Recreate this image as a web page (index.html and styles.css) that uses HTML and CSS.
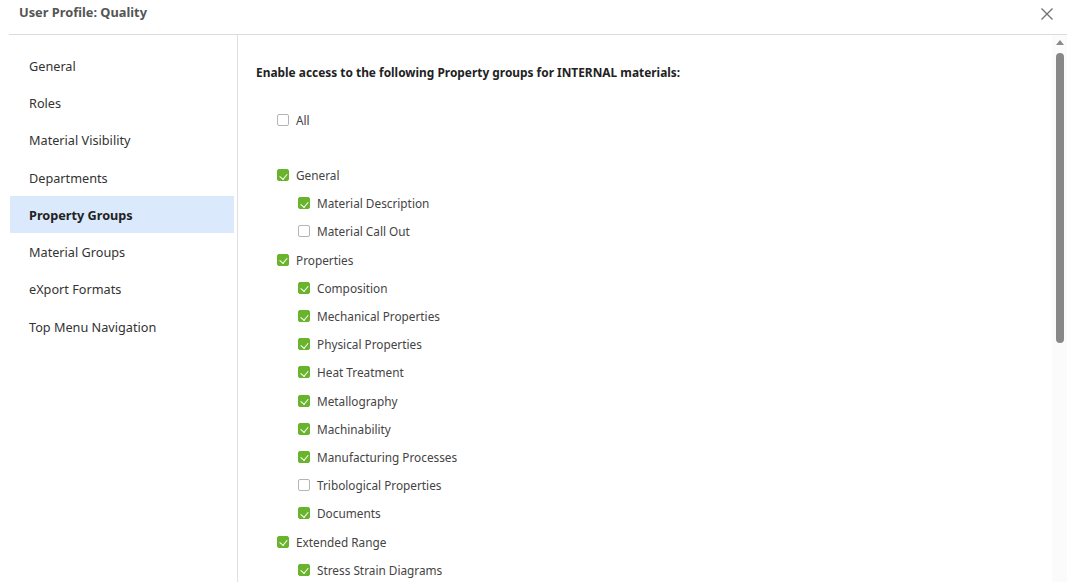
FILE: index.html
```html
<!DOCTYPE html>
<html>
<head>
<meta charset="utf-8">
<link rel="stylesheet" href="styles.css">
</head>
<body>
<div class="dialog">
  <div class="header">
    <div class="title">User Profile: Quality</div>
    <button class="close" aria-label="Close">
      <svg width="14" height="14" viewBox="0 0 14 14"><path d="M1.5 1.5 L12.5 12.5 M12.5 1.5 L1.5 12.5" stroke="#6f6f6f" stroke-width="1.3" fill="none"/></svg>
    </button>
  </div>
  <div class="body">
    <nav class="sidebar">
      <div class="nav-item">General</div>
      <div class="nav-item">Roles</div>
      <div class="nav-item">Material Visibility</div>
      <div class="nav-item">Departments</div>
      <div class="nav-item active">Property Groups</div>
      <div class="nav-item">Material Groups</div>
      <div class="nav-item">eXport Formats</div>
      <div class="nav-item">Top Menu Navigation</div>
    </nav>
    <main class="content">
      <h2 class="heading">Enable access to the following Property groups for INTERNAL materials:</h2>
      <div class="list">
        <label class="row all"><span class="cb"></span>All</label>
        <label class="row"><span class="cb on"></span>General</label>
        <label class="row sub"><span class="cb on"></span>Material Description</label>
        <label class="row sub"><span class="cb"></span>Material Call Out</label>
        <label class="row"><span class="cb on"></span>Properties</label>
        <label class="row sub"><span class="cb on"></span>Composition</label>
        <label class="row sub"><span class="cb on"></span>Mechanical Properties</label>
        <label class="row sub"><span class="cb on"></span>Physical Properties</label>
        <label class="row sub"><span class="cb on"></span>Heat Treatment</label>
        <label class="row sub"><span class="cb on"></span>Metallography</label>
        <label class="row sub"><span class="cb on"></span>Machinability</label>
        <label class="row sub"><span class="cb on"></span>Manufacturing Processes</label>
        <label class="row sub"><span class="cb"></span>Tribological Properties</label>
        <label class="row sub"><span class="cb on"></span>Documents</label>
        <label class="row"><span class="cb on"></span>Extended Range</label>
        <label class="row sub"><span class="cb on"></span>Stress Strain Diagrams</label>
      </div>
    </main>
    <div class="scrollbar">
      <div class="arrow"></div>
      <div class="thumb"></div>
    </div>
  </div>
</div>
</body>
</html>
```
FILE: styles.css
```css
html, body {
  margin: 0;
  padding: 0;
  background: #fff;
  height: 100%;
  overflow: hidden;
}
body {
  font-family: "Noto Sans", "Open Sans", sans-serif;
  color: #333;
}
.dialog {
  padding: 0 7px 0 9px;
  height: 582px;
  display: flex;
  flex-direction: column;
}
.header {
  height: 35px;
  border-bottom: 1px solid #dcdcdc;
  display: flex;
  align-items: flex-start;
  justify-content: space-between;
  box-sizing: border-box;
}
.title {
  font-weight: 700;
  font-size: 12.8px;
  color: #555;
  margin-left: 10px;
  line-height: 24px;
}
.close {
  border: 0;
  background: none;
  padding: 0;
  margin: 7px 13px 0 0;
  width: 14px;
  height: 14px;
  display: flex;
}
.body {
  flex: 1;
  display: flex;
  min-height: 0;
}
.sidebar {
  width: 229px;
  border-right: 1px solid #e0e0e0;
  padding: 12px 3px 0 1px;
  box-sizing: border-box;
  flex-shrink: 0;
}
.nav-item {
  height: 37.3px;
  display: flex;
  align-items: center;
  padding-left: 19px;
  font-size: 12.7px;
  color: #333;
}
.nav-item.active {
  background: #dbe9fd;
  font-weight: 700;
  color: #222;
}
.content {
  flex: 1;
  padding: 28px 0 0 18px;
  overflow: hidden;
}
.heading {
  margin: 0;
  font-size: 11.9px;
  font-weight: 700;
  color: #222;
  line-height: 18px;
}
.list {
  padding-left: 21px;
  margin-top: 25px;
}
.row {
  display: flex;
  align-items: center;
  height: 28.2px;
  font-size: 11.8px;
  color: #444;
}
.row.all {
  margin-bottom: 26.8px;
}
.row.sub {
  padding-left: 21px;
}
.cb {
  width: 12px;
  height: 12px;
  box-sizing: border-box;
  border: 1px solid #b5b5b5;
  border-radius: 2px;
  margin-right: 7px;
  background: #fff;
  position: relative;
  flex-shrink: 0;
}
.cb.on {
  background: #6ab42d;
  border-color: #6ab42d;
}
.cb.on::after {
  content: "";
  position: absolute;
  left: 3px;
  top: 1.5px;
  width: 3.5px;
  height: 6px;
  border: solid #fff;
  border-width: 0 1.5px 1.5px 0;
  transform: rotate(40deg);
}
.scrollbar {
  width: 15px;
  background: #fbfbfb;
  flex-shrink: 0;
  display: flex;
  flex-direction: column;
  align-items: center;
  padding-top: 5px;
  box-sizing: border-box;
}
.arrow {
  width: 0;
  height: 0;
  border-left: 4px solid transparent;
  border-right: 4px solid transparent;
  border-bottom: 5px solid #8a8a8a;
  margin-bottom: 8px;
}
.thumb {
  width: 8px;
  height: 290px;
  background: #888;
  border-radius: 4px;
}
```
